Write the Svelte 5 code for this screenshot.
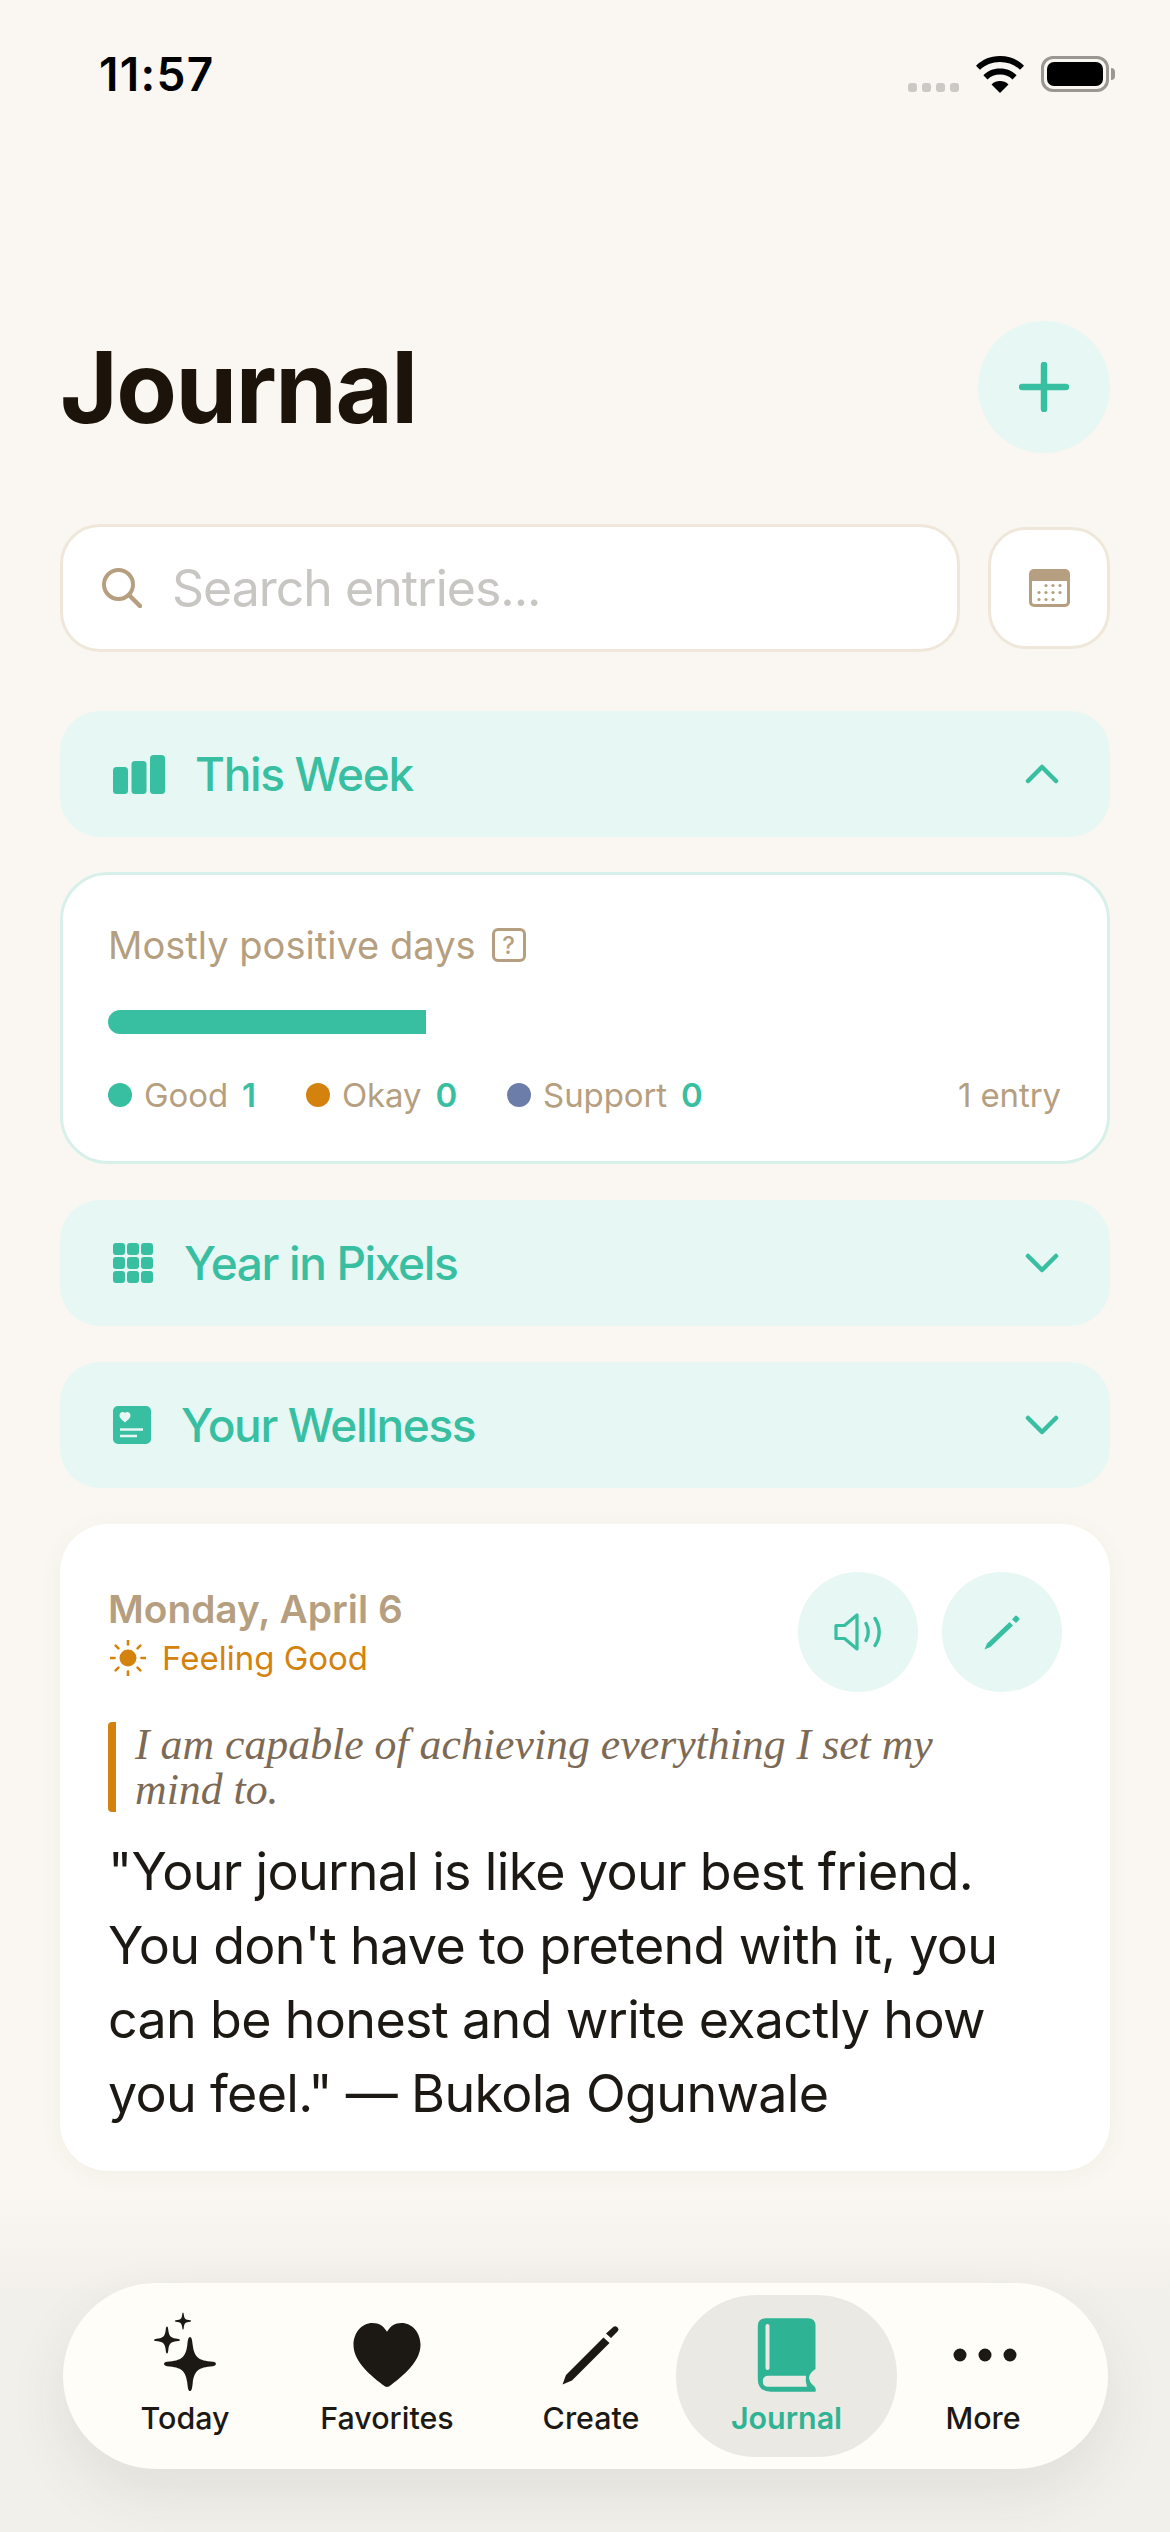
<script>
  const legend = [
    { label: 'Good', value: 1, tone: 'good' },
    { label: 'Okay', value: 0, tone: 'okay' },
    { label: 'Support', value: 0, tone: 'support' }
  ];
  const star = 'M0-100C6-100 8-90 10-70C16-25 30-12 85-8C100-6 100 6 85 8C30 12 16 25 10 70C8 90 6 100 0 100C-6 100-8 90-10 70C-16 25-30 12-85 8C-100 6-100-6-85-8C-30-12-16-25-10-70C-8-90-6-100 0-100Z';
  const calDots = [
    [24,14],[31,14],[38,14],
    [17,21],[24,21],[31,21],[38,21],
    [17,28],[24,28],[31,28]
  ];
  const gridCells = [0, 14, 28].flatMap((y) => [0, 14, 28].map((x) => [x, y]));
  const rays = [0, 45, 90, 135, 180, 225, 270, 315];
</script>

<div class="screen">
  <div class="status">
    <span class="time">11:57</span>
    <div class="status-right">
      <div class="signal"><i></i><i></i><i></i><i></i></div>
      <svg class="wifi" viewBox="0 0 48 37" aria-hidden="true">
        <path d="M24 37 15.500 28.400C20.500 24 27.500 24 32.500 28.400Z" fill="#000"/>
        <path d="M24 12.500C31 12.500 36.500 15.200 40.600 19.300L36.500 23.400C33.300 20.400 29 18.500 24 18.500S14.700 20.400 11.500 23.400L7.400 19.300C11.500 15.200 17 12.500 24 12.500Z" fill="#000"/>
        <path d="M24 0C34 0 42 3.700 48 9.700L44 13.800C38.800 8.800 32 6 24 6S9.200 8.800 4 13.800L0 9.700C6 3.700 14 0 24 0Z" fill="#000"/>
      </svg>
      <div class="battery"><div class="battery-fill"></div></div>
      <div class="battery-cap"></div>
    </div>
  </div>

  <main class="content">
    <header class="header">
      <h1>Journal</h1>
      <button class="add" aria-label="Add entry">
        <svg viewBox="0 0 50 50" width="50" height="50" aria-hidden="true">
          <path d="M25 3V47M3 25H47" stroke="#38BFA1" stroke-width="6.500" stroke-linecap="round" fill="none"/>
        </svg>
      </button>
    </header>

    <div class="search-row">
      <div class="search">
        <svg class="search-icon" viewBox="0 0 40 40" aria-hidden="true">
          <circle cx="16.500" cy="16.500" r="14.500" fill="none" stroke="#B59F80" stroke-width="4"/>
          <path d="M27 27 38 38" stroke="#B59F80" stroke-width="4.500" stroke-linecap="round"/>
        </svg>
        <span class="placeholder">Search entries...</span>
      </div>
      <button class="cal" aria-label="Calendar">
        <svg viewBox="0 0 41 38" width="41" height="38" aria-hidden="true">
          <rect width="41" height="38" rx="5" fill="#B59F80"/>
          <path d="M3 12H38V32.500Q38 35 35.500 35H5.500Q3 35 3 32.500Z" fill="#fff"/>
          {#each calDots as [x, y]}
            <circle cx={x - 7} cy={y + 2.500} r="1.600" fill="#B59F80"/>
          {/each}
        </svg>
      </button>
    </div>

    <section class="toggle first">
      <svg class="ico-week" viewBox="0 0 52 39" aria-hidden="true">
        <rect x="0" y="12" width="15" height="27" rx="3.500"/>
        <rect x="18.500" y="6" width="15" height="33" rx="3.500"/>
        <rect x="37" y="0" width="15" height="39" rx="3.500"/>
      </svg>
      <span class="toggle-label gap-week">This Week</span>
      <svg class="chev" viewBox="0 0 34 20" aria-hidden="true"><path d="M3 17 17 3 31 17"/></svg>
    </section>

    <section class="week-card">
      <div class="mood-title">
        <span>Mostly positive days</span>
        <span class="help">?</span>
      </div>
      <div class="bar"></div>
      <div class="legend">
        {#each legend as item}
          <div class="legend-item">
            <i class="dot {item.tone}"></i>
            <span class="legend-label">{item.label}</span>
            <b>{item.value}</b>
          </div>
        {/each}
        <span class="entry-count">1 entry</span>
      </div>
    </section>

    <section class="toggle">
      <svg class="ico-grid" viewBox="0 0 40 40" aria-hidden="true">
        {#each gridCells as [x, y]}
          <rect {x} {y} width="12" height="12" rx="3"/>
        {/each}
      </svg>
      <span class="toggle-label gap-grid">Year in Pixels</span>
      <svg class="chev" viewBox="0 0 34 20" aria-hidden="true"><path d="M3 3 17 17 31 3"/></svg>
    </section>

    <section class="toggle">
      <svg class="ico-well" viewBox="0 0 38 38" aria-hidden="true">
        <rect width="38" height="38" rx="5"/>
        <path d="M12 16.500C8 13.500 6.500 11.500 6.500 9.300C6.500 7.300 8 6 9.700 6C10.800 6 11.600 6.500 12 7.300C12.400 6.500 13.200 6 14.300 6C16 6 17.500 7.300 17.500 9.300C17.500 11.500 16 13.500 12 16.500Z" fill="#E7F7F3"/>
        <path d="M7 23.500H30M7 30H24" stroke="#E7F7F3" stroke-width="2.600" fill="none"/>
      </svg>
      <span class="toggle-label gap-well">Your Wellness</span>
      <svg class="chev" viewBox="0 0 34 20" aria-hidden="true"><path d="M3 3 17 17 31 3"/></svg>
    </section>

    <article class="entry">
      <div class="entry-top">
        <div class="entry-meta">
          <div class="entry-date">Monday, April 6</div>
          <div class="feeling">
            <svg viewBox="0 0 36 36" width="36" height="36" aria-hidden="true">
              <circle cx="18" cy="18" r="8.500" fill="#D4820E"/>
              {#each rays as r}
                <path d="M18 0.500V4.500" stroke="#D4820E" stroke-width="2.600" stroke-linecap="round" transform="rotate({r} 18 18)"/>
              {/each}
            </svg>
            <span>Feeling Good</span>
          </div>
        </div>
        <div class="entry-actions">
          <button class="round" aria-label="Read aloud">
            <svg viewBox="0 0 50 38" width="50" height="38" fill="none" stroke="#38BFA1" stroke-linecap="round" stroke-linejoin="round" aria-hidden="true">
              <path d="M3 12.500H11.500L24 2V36L11.500 25.500H3Z" stroke-width="3.200"/>
              <path d="M33 10.500C36 15.500 36 22.500 33 27.500M42 5.500C47.500 13.500 47.500 24.500 42 32.500" stroke-width="3.400"/>
            </svg>
          </button>
          <button class="round" aria-label="Edit">
            <svg viewBox="0 0 36 36" width="36" height="36" aria-hidden="true">
              <path d="M0.500 35.500 3 29.500 25.500 8 29 11.500 6.500 33Z" fill="#38BFA1"/>
              <path d="M28 5.500 31 2Q32 1 33 2L35 4Q36 5 35 6L32 9Z" fill="#38BFA1"/>
            </svg>
          </button>
        </div>
      </div>
      <blockquote class="affirm">I am capable of achieving everything I set my mind to.</blockquote>
      <p class="quote">"Your journal is like your best friend. You don't have to pretend with it, you can be honest and write exactly how you feel." — Bukola Ogunwale</p>
    </article>
  </main>

  <nav class="tabs-wrap">
    <div class="tabs">
      <div class="tab">
        <svg class="tab-ico" viewBox="0 0 70 84" width="70" height="84" aria-hidden="true">
          <g fill="#1C1914">
            <path d={star} transform="translate(40 57) scale(.27)"/>
            <path d={star} transform="translate(17 33) scale(.135)"/>
            <path d={star} transform="translate(33 14) scale(.085)"/>
          </g>
        </svg>
        <span>Today</span>
      </div>
      <div class="tab">
        <svg class="tab-ico" viewBox="0 0 70 84" width="70" height="84" aria-hidden="true">
          <path transform="translate(0 3.500) scale(1 1.040)" d="M35 73.500C33.800 73.500 32.500 72.700 31 71.600C14 59.500 1.500 47 1.500 33C1.500 21.500 9.500 12 20.500 12C27 12 32 15.200 35 20.500C38 15.200 43 12 49.500 12C60.500 12 68.500 21.500 68.500 33C68.500 47 56 59.500 39 71.600C37.500 72.700 36.200 73.500 35 73.500Z" fill="#1C1914"/>
        </svg>
        <span>Favorites</span>
      </div>
      <div class="tab">
        <svg class="tab-ico" viewBox="0 0 70 84" width="70" height="84" aria-hidden="true">
          <g transform="translate(-0.500 5)" fill="#1C1914">
            <path d="M7 72.500 10.500 63 48 25.500 54 31 16.500 68.500Z"/>
            <path d="M50.500 21.500 58 14.800Q60 13.500 61.500 15L62.500 16Q63.800 17.800 62 19.500L55.500 26Z"/>
          </g>
        </svg>
        <span>Create</span>
      </div>
      <div class="tab active">
        <svg class="tab-ico" viewBox="0 0 70 84" width="70" height="84" aria-hidden="true">
          <path d="M14 11.300H56Q63.500 11.300 63.500 19V62Q57.500 66 57 70.500Q57.500 76 62 79Q64.500 81 63.500 84.700H19Q5.800 84.700 5.800 72V19Q5.800 11.300 14 11.300Z" fill="#2EB394"/>
          <rect x="13.500" y="17" width="4" height="46" rx="2" fill="#EBE9E4"/>
          <path d="M16.500 68.700H54Q53 74.500 55 79.700H16.500Q10.800 79.700 10.800 74.200T16.500 68.700Z" fill="#EBE9E4"/>
        </svg>
        <span>Journal</span>
      </div>
      <div class="tab">
        <svg class="tab-ico" viewBox="0 0 70 84" width="70" height="84" aria-hidden="true">
          <circle cx="12" cy="48" r="6.500" fill="#1C1914"/>
          <circle cx="37" cy="48" r="6.500" fill="#1C1914"/>
          <circle cx="62" cy="48" r="6.500" fill="#1C1914"/>
        </svg>
        <span>More</span>
      </div>
    </div>
  </nav>
</div>

<style>
  :global(body) {
    margin: 0;
    background: #FAF7F2;
  }
  .screen {
    position: relative;
    width: 1170px;
    height: 2532px;
    overflow: hidden;
    background: #FAF7F2;
    font-family: Inter, "Noto Sans", sans-serif;
    color: #1C1914;
  }
  .status {
    height: 148px;
    padding: 49px 55px 0 99px;
    box-sizing: border-box;
    display: flex;
    justify-content: space-between;
    align-items: flex-start;
  }
  .time {
    font-size: 46px;
    line-height: 50px;
    font-weight: 600;
    color: #000;
    letter-spacing: 1.300px;
  }
  .status-right {
    display: flex;
    align-items: flex-start;
    padding-top: 7px;
  }
  .signal {
    display: flex;
    gap: 5px;
    margin-top: 27px;
    margin-right: 17px;
  }
  .signal i {
    width: 9px;
    height: 9px;
    border-radius: 3px;
    background: #CBC9C5;
  }
  .wifi {
    width: 48px;
    height: 37px;
    margin-right: 17px;
  }
  .battery {
    width: 68px;
    height: 36px;
    box-sizing: border-box;
    border: 3px solid #9A9792;
    border-radius: 12px;
    padding: 3px;
  }
  .battery-fill {
    width: 100%;
    height: 100%;
    background: #000;
    border-radius: 7px;
  }
  .battery-cap {
    width: 4px;
    height: 12px;
    margin: 12px 0 0 2px;
    background: #9A9792;
    border-radius: 0 6px 6px 0;
  }
  .content {
    padding: 0 60px;
  }
  .header {
    margin-top: 173px;
    height: 132px;
    display: flex;
    justify-content: space-between;
    align-items: center;
  }
  h1 {
    margin: 0;
    font-size: 99px;
    line-height: 132px;
    font-weight: 700;
    color: #1C140A;
    letter-spacing: -1.500px;
  }
  button {
    border: 0;
    padding: 0;
    display: flex;
    align-items: center;
    justify-content: center;
  }
  .add {
    width: 132px;
    height: 132px;
    border-radius: 50%;
    background: #E7F7F3;
  }
  .search-row {
    margin-top: 71px;
    display: flex;
    justify-content: space-between;
    align-items: center;
  }
  .search {
    width: 900px;
    height: 128px;
    box-sizing: border-box;
    background: #fff;
    border: 3px solid #EFE7DA;
    border-radius: 40px;
    display: flex;
    align-items: center;
    padding-left: 39px;
  }
  .search-icon {
    width: 40px;
    height: 40px;
    margin-right: 30px;
  }
  .placeholder {
    font-size: 50px;
    color: #C8C6C3;
    letter-spacing: -1px;
  }
  .cal {
    width: 122px;
    height: 122px;
    box-sizing: border-box;
    background: #fff;
    border: 3px solid #EFE7DA;
    border-radius: 38px;
  }
  .toggle {
    margin-top: 36px;
    height: 126px;
    background: #E7F7F3;
    border-radius: 40px;
    display: flex;
    align-items: center;
    padding: 0 51px 0 53px;
    color: #38BFA1;
  }
  .toggle.first {
    margin-top: 59px;
  }
  .toggle-label {
    font-size: 46px;
    font-weight: 500;
    letter-spacing: -1.350px;
    flex: 1;
  }
  .toggle svg:not(.chev) {
    fill: #38BFA1;
    flex: none;
  }
  .ico-week { width: 52px; height: 39px; }
  .ico-grid { width: 40px; height: 40px; }
  .ico-well { width: 38px; height: 38px; }
  .gap-week { margin-left: 30px; }
  .gap-grid { margin-left: 31px; }
  .gap-well { margin-left: 30px; }
  .chev {
    width: 34px;
    height: 20px;
    fill: none;
    stroke: #38BFA1;
    stroke-width: 4.500;
    stroke-linecap: round;
    stroke-linejoin: round;
    flex: none;
  }
  .week-card {
    margin-top: 35px;
    height: 292px;
    box-sizing: border-box;
    background: #fff;
    border: 3px solid #D8F0EA;
    border-radius: 48px;
    padding: 48px 46px 0 45px;
    color: #B59F80;
  }
  .mood-title {
    display: flex;
    align-items: center;
    height: 44px;
    font-size: 38.100px;
    gap: 16px;
  }
  .help {
    width: 34px;
    height: 34px;
    box-sizing: border-box;
    border: 3px solid #B59F80;
    border-radius: 6px;
    font-size: 24px;
    font-weight: 500;
    display: flex;
    align-items: center;
    justify-content: center;
  }
  .bar {
    margin-top: 43px;
    width: 318px;
    height: 24px;
    background: #38BFA1;
    border-radius: 12px 0 0 12px;
  }
  .legend {
    margin-top: 39px;
    display: flex;
    align-items: center;
    height: 44px;
    font-size: 33px;
    letter-spacing: -0.100px;
  }
  .legend-item {
    display: flex;
    align-items: center;
    margin-right: 50px;
  }
  .dot {
    width: 24px;
    height: 24px;
    border-radius: 50%;
    margin-right: 12px;
  }
  .dot.good { background: #38BFA1; }
  .dot.okay { background: #D4820E; }
  .dot.support { background: #6B7DA8; }
  .legend-item b {
    margin-left: 14px;
    color: #38BFA1;
    font-weight: 600;
  }
  .entry-count {
    margin-left: auto;
  }
  .entry {
    margin-top: 36px;
    background: #fff;
    border-radius: 48px;
    padding: 48px 48px 40px;
    box-shadow: 0 4px 24px rgba(90, 70, 40, 0.05);
    box-sizing: border-box;
    height: 647px;
  }
  .entry-top {
    display: flex;
    justify-content: space-between;
    align-items: flex-start;
  }
  .entry-meta {
    padding-top: 14px;
  }
  .entry-date {
    font-size: 38.800px;
    line-height: 46px;
    font-weight: 600;
    color: #B59F80;
  }
  .feeling {
    margin-top: 4px;
    display: flex;
    align-items: center;
    gap: 16px;
    font-size: 33px;
    line-height: 44px;
    color: #D4820E;
    padding-left: 2px;
  }
  .entry-actions {
    display: flex;
    gap: 24px;
  }
  .round {
    width: 120px;
    height: 120px;
    border-radius: 50%;
    background: #E7F7F3;
  }
  .affirm {
    margin: 30px 0 0;
    border-left: 8px solid #D4820E;
    border-radius: 4px;
    padding-left: 19px;
    max-width: 860px;
    font-family: "Liberation Serif", serif;
    font-style: italic;
    font-size: 43.800px;
    line-height: 45px;
    color: #7D6A55;
  }
  .quote {
    margin: 23px 0 0;
    font-size: 52px;
    line-height: 74px;
    letter-spacing: -0.680px;
    color: #1C1914;
  }
  .tabs-wrap {
    position: absolute;
    left: 0;
    right: 0;
    bottom: 0;
    height: 340px;
    background: linear-gradient(to bottom, rgba(240, 238, 233, 0), #F2F0EB 30%);
  }
  .tabs {
    position: absolute;
    left: 63px;
    top: 91px;
    width: 1045px;
    height: 186px;
    box-sizing: border-box;
    padding: 12px 39px;
    background: #FFFDF8;
    border-radius: 93px;
    box-shadow: 0 24px 60px rgba(60, 50, 30, 0.09);
    display: grid;
    grid-template-columns: 166px 238px 170px 221px 172px;
  }
  .tab {
    height: 162px;
    border-radius: 80px;
    display: flex;
    flex-direction: column;
    align-items: center;
    font-size: 30.400px;
    font-weight: 500;
    color: #1C1914;
  }
  .tab-ico {
    margin-top: 12px;
    flex: none;
    overflow: visible;
  }
  .tab span {
    margin-top: 9px;
    line-height: 36px;
  }
  .tab.active {
    background: #EBE9E4;
    color: #2EB394;
    font-weight: 600;
  }
</style>
